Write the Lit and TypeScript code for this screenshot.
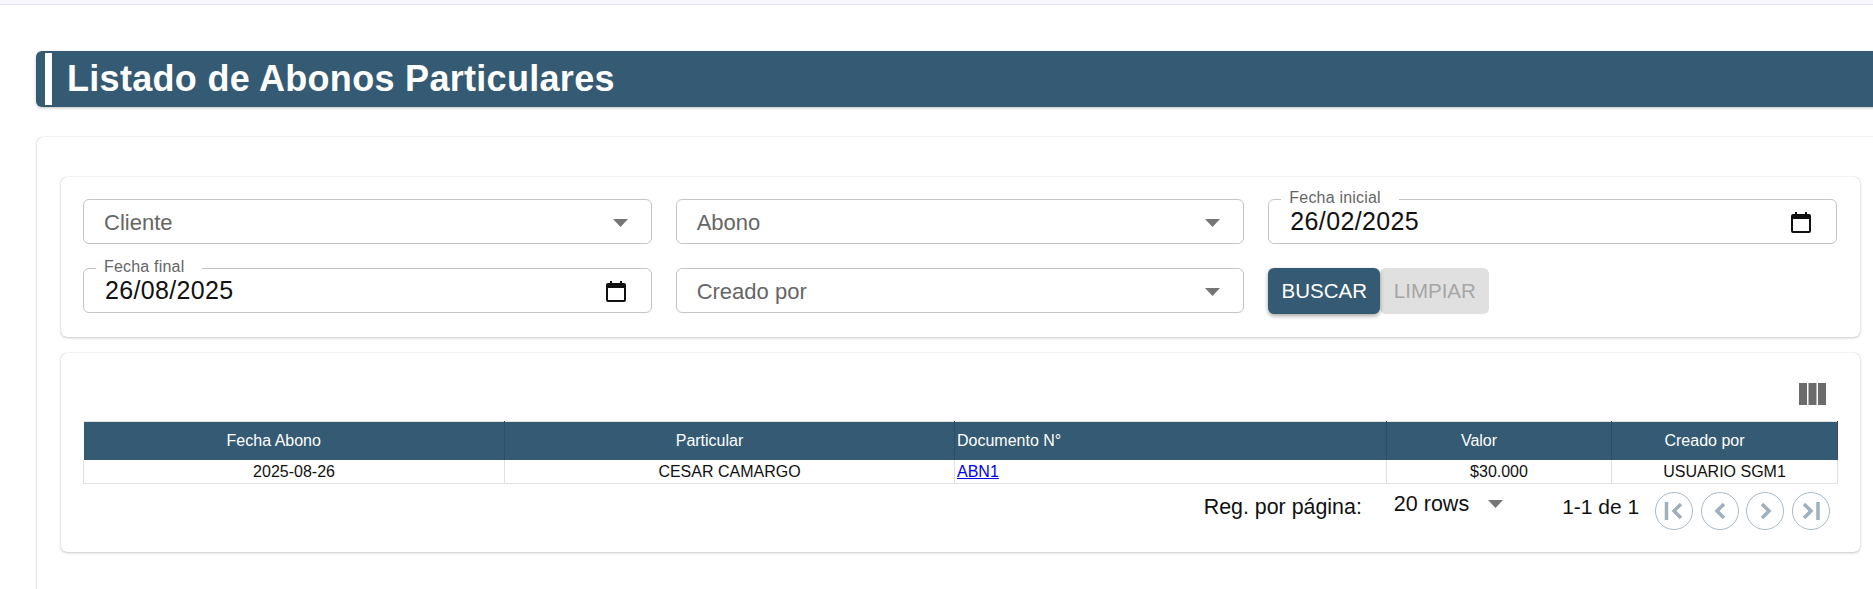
import { LitElement, html, css, svg } from "lit";
import { customElement } from "lit/decorators.js";

const caret = html`<svg class="caret" viewBox="0 0 15 8"><path d="M0 0h15L7.500 8z" fill="#757575"/></svg>`;
const calendar = html`<svg class="cal" viewBox="0 0 20 21"><path d="M4 0h2v2h8V0h2v2h2a2 2 0 0 1 2 2v15a2 2 0 0 1-2 2H2a2 2 0 0 1-2-2V4a2 2 0 0 1 2-2h2zM2 7v12h16V7z" fill="#111"/></svg>`;

const icon = (d: unknown) => html`<button class="pg"><svg viewBox="0 0 36 36">${d}</svg></button>`;
const stroke = "fill:none;stroke:#9eb0bd;stroke-width:3.500";

@customElement("app-root")
export class AppRoot extends LitElement {
  static styles = css`
    :host { display: block; height: 589px; overflow: hidden; background: #fff; font-family: "Liberation Sans", Arial, sans-serif; color: #111; }
    .topbar { height: 4px; background: #f8f7fd; border-bottom: 1px solid #e6e5f4; }
    .page { padding: 46px 0 0 36px; display: flex; flex-direction: column; gap: 30px; width: 1900px; box-sizing: border-box; }
    .title { height: 56px; box-sizing: border-box; background: #355a73; border-radius: 6px; padding: 2px 0 2px 9px; display: flex; box-shadow: 0 1px 3px rgba(0,0,0,.25); }
    .title i { width: 7px; background: #fff; }
    .title h1 { margin: 0; padding: 1px 0 0 15px; font-size: 36px; line-height: 50px; font-weight: 700; color: #fff; letter-spacing: .3px; }
    .card { margin-left: 1px; background: #fff; border-radius: 6px 0 0 6px; box-shadow: 0 1px 3px rgba(0,0,0,.2), 0 0 1px rgba(0,0,0,.25); padding: 40px 0 0 24px; height: 500px; display: flex; flex-direction: column; gap: 16px; }
    .panel { width: 1799px; box-sizing: border-box; background: #fff; border-radius: 6px; box-shadow: 0 1px 3px rgba(0,0,0,.2), 0 0 1px rgba(0,0,0,.25); padding: 22px 23px 22px 22px; }
    .filterpanel { height: 160px; }
    .filters { display: grid; grid-template-columns: repeat(3, 1fr); grid-auto-rows: 45px; gap: 24px; }
    .field { position: relative; height: 45px; box-sizing: border-box; border: 1px solid #c4c4c4; border-radius: 6px; display: flex; align-items: center; justify-content: space-between; padding: 3px 23px 0 20px; font-size: 22px; color: #666; }
    .caret { width: 15px; height: 8px; }
    .date { color: #111; font-size: 25px; letter-spacing: .35px; padding: 0 25px 0 21px; }
    .cal { width: 20px; height: 21px; margin-top: 1px; }
    .date label { position: absolute; left: 12px; top: -11px; background: #fff; padding: 0 18px 0 8px; font-size: 16px; line-height: 18px; color: #666; letter-spacing: .2px; }
    .actions { display: flex; height: 46px; }
    .btn { border: 0; border-radius: 6px; height: 46px; font: 20.500px "Liberation Sans", Arial, sans-serif; padding: 0; }
    .primary { width: 112px; background: #355a73; color: #fff; box-shadow: 0 2px 4px rgba(0,0,0,.35); position: relative; }
    .disabled { width: 109px; background: #e0e0e0; color: #a6a6a6; }
    .tablepanel { height: 199px; padding: 30px 23px 0 22px; }
    .tools { display: flex; justify-content: flex-end; height: 38px; padding-right: 11px; }
    .tools svg { width: 27px; height: 22px; }
    table { width: 100%; border-collapse: collapse; table-layout: fixed; font-size: 16px; }
    th { background: #355a73; color: #fff; font-weight: 400; height: 38px; padding: 0 40px 0 0; border-top: 1px solid #e0e0e0; border-right: 1px solid #2e4f65; }
    td { height: 23px; padding: 0; text-align: center; border: 1px solid #e0e0e0; border-top: 0; }
    th.l, td.l { text-align: left; padding: 0 0 0 2px; }
    a { color: #0000ee; }
    .pager { display: flex; justify-content: flex-end; height: 38px; margin-top: 8px; }
    .pager > span { line-height: 24px; white-space: nowrap; }
    .reg { font-size: 21.400px; margin: 3px 32px 0 0; }
    .rows { font-size: 21.500px; display: flex; align-items: center; gap: 19px; margin-right: 59px; height: 24px; }
    .count { font-size: 21px; margin: 3px 16px 0 0; }
    .pgs { display: flex; gap: 7.600px; margin-right: 7px; }
    .pg { width: 38px; height: 38px; border: 1px solid #a9bac6; border-radius: 50%; background: #fff; padding: 0; display: block; box-sizing: border-box; }
    .pg svg { width: 36px; height: 36px; display: block; }
  `;

  render() {
    return html`
      <div class="topbar"></div>
      <div class="page">
        <div class="title"><i></i><h1>Listado de Abonos Particulares</h1></div>
        <div class="card">
          <div class="panel filterpanel">
            <div class="filters">
              <div class="field"><span>Cliente</span>${caret}</div>
              <div class="field"><span>Abono</span>${caret}</div>
              <div class="field date"><label>Fecha inicial</label><span>26/02/2025</span>${calendar}</div>
              <div class="field date"><label>Fecha final</label><span>26/08/2025</span>${calendar}</div>
              <div class="field"><span>Creado por</span>${caret}</div>
              <div class="actions">
                <button class="btn primary">BUSCAR</button>
                <button class="btn disabled" disabled>LIMPIAR</button>
              </div>
            </div>
          </div>
          <div class="panel tablepanel">
            <div class="tools">
              <svg viewBox="0 0 27 22"><path d="M0 0h8v22H0zM9.500 0h8v22h-8zM19 0h8v22h-8z" fill="#6b6b6b"/></svg>
            </div>
            <table>
              <colgroup>
                <col style="width:421px"/><col style="width:450px"/><col style="width:432px"/><col style="width:225px"/><col style="width:226px"/>
              </colgroup>
              <thead><tr><th>Fecha Abono</th><th>Particular</th><th class="l">Documento N°</th><th>Valor</th><th>Creado por</th></tr></thead>
              <tbody><tr><td>2025-08-26</td><td>CESAR CAMARGO</td><td class="l"><a href="#">ABN1</a></td><td>$30.000</td><td>USUARIO SGM1</td></tr></tbody>
            </table>
            <div class="pager">
              <span class="reg">Reg. por página:</span>
              <span class="rows">20 rows ${caret}</span>
              <span class="count">1-1 de 1</span>
              <div class="pgs">
                ${icon(svg`<path d="M10.500 9v18" style=${stroke}/><path d="M25 11l-7 7 7 7" style=${stroke}/>`)}
                ${icon(svg`<path d="M22 11l-7 7 7 7" style=${stroke}/>`)}
                ${icon(svg`<path d="M15 11l7 7-7 7" style=${stroke}/>`)}
                ${icon(svg`<path d="M25 9v18" style=${stroke}/><path d="M11 11l7 7-7 7" style=${stroke}/>`)}
              </div>
            </div>
          </div>
        </div>
      </div>
    `;
  }
}
